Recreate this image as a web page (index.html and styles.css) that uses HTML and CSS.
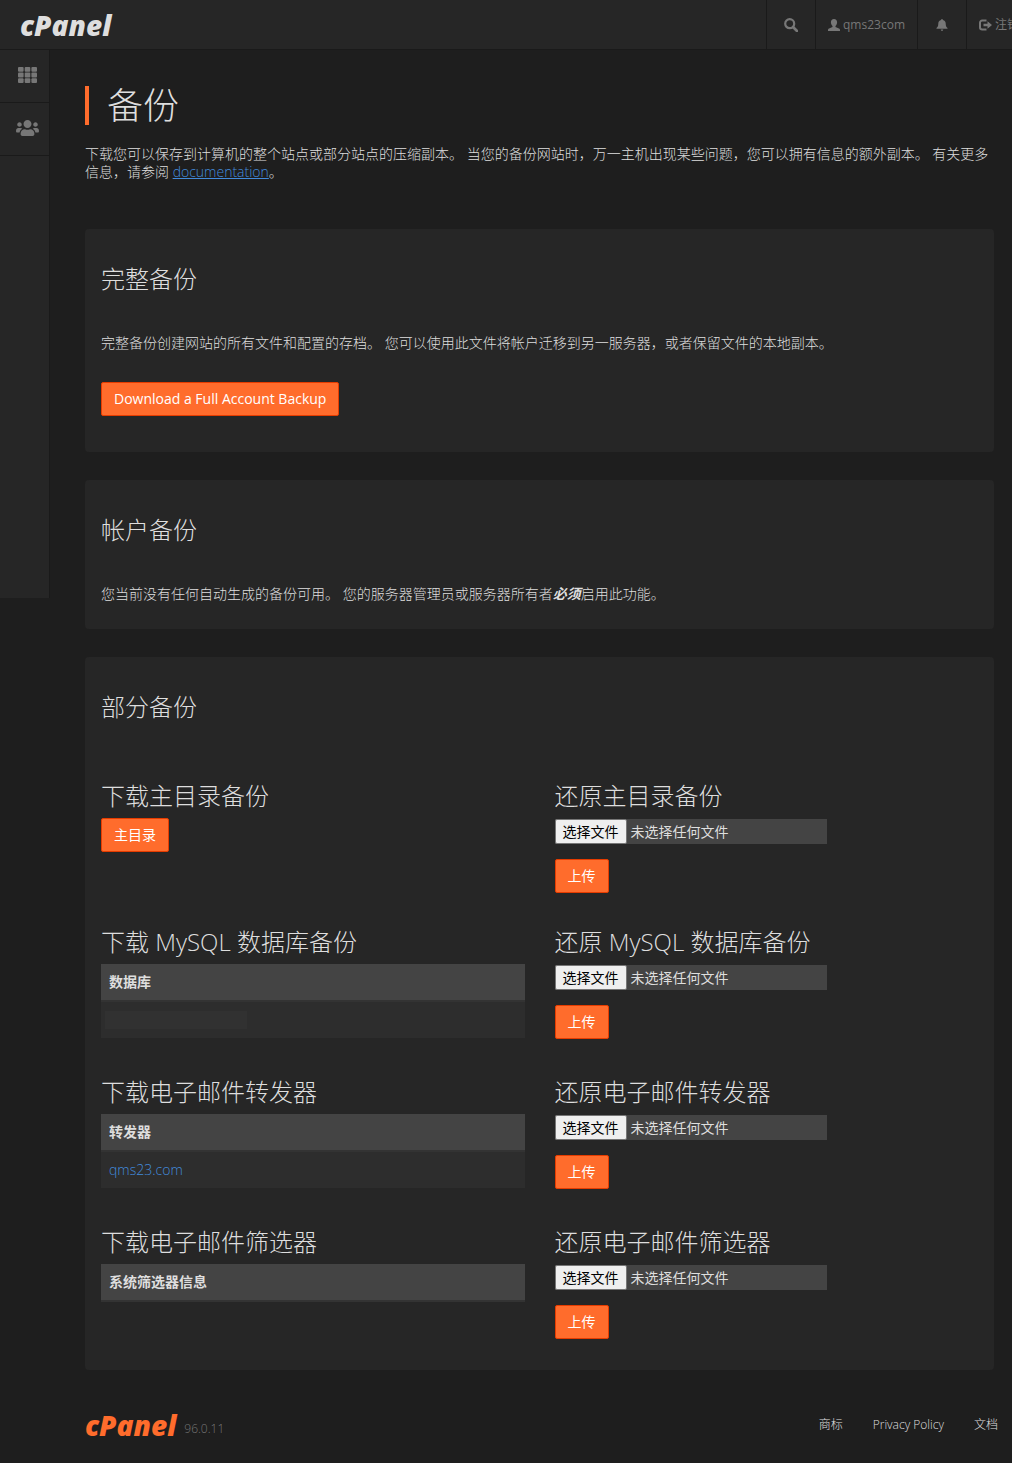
FILE: index.html
```
<!DOCTYPE html>
<html lang="zh-CN">
    <head>
        <meta charset="UTF-8">
        <meta name="viewport" content="width=device-width, initial-scale=1.0">
        <title>cPanel - 备份</title>
        <link rel="stylesheet" href="styles.css">
    </head>

    <body>
        <header class="topbar">
            <a class="logo" href="#">cPanel</a>
            <nav class="topnav">
                <a class="topnav-icon" href="#" aria-label="搜索">
                    <svg width="14" height="14" viewBox="0 0 14 14">
                        <circle cx="5.7" cy="5.7" r="4.5" fill="none" stroke="currentColor" stroke-width="2.2"/>
                        <path d="M9 9l4 4" stroke="currentColor" stroke-width="2.6" stroke-linecap="round"/>
                    </svg>
                </a>
                <a href="#">
                    <svg width="12" height="12" viewBox="0 0 12 12" fill="currentColor">
                        <path d="M6 0C4 0 2.900 1.400 2.900 3.300c0 1.500.6 2.900 1.600 3.700v1L1 9.500C.3 9.800 0 10.300 0 11v1h12v-1c0-.7-.3-1.200-1-1.500L7.500 8V7c1-.8 1.600-2.200 1.600-3.700C9.100 1.400 8 0 6 0z"/>
                    </svg>
                    <span>qms23com</span>
                </a>
                <a class="topnav-icon" href="#" aria-label="通知">
                    <svg width="12" height="12" viewBox="0 0 12 12" fill="currentColor">
                        <path d="M6 0c-.6 0-.9.400-.9.900C3.300 1.300 2.300 2.700 2.300 4.500c0 2.500-.7 3.700-1.800 4.600v.7h11v-.7C10.400 8.200 9.700 7 9.700 4.500c0-1.800-1-3.200-2.800-3.600C6.900.4 6.600 0 6 0zM4.700 10.600c.1.800.6 1.300 1.300 1.300s1.200-.5 1.300-1.300z"/>
                    </svg>
                </a>
                <a href="#">
                    <svg width="13" height="12" viewBox="0 0 13 12">
                        <path d="M7.500 1.500H3.200A2.200 2.200 0 0 0 1 3.700v4.600a2.200 2.200 0 0 0 2.200 2.200h4.300" fill="none" stroke="currentColor" stroke-width="2"/>
                        <path d="M4.500 4.700h4V2.200L13 6 8.500 9.800V7.300h-4z" fill="currentColor"/>
                    </svg>
                    <span>注销</span>
                </a>
            </nav>
        </header>

        <div class="layout">
            <aside class="sidebar">
                <a href="#" aria-label="主页">
                    <svg width="19" height="16" viewBox="0 0 19 16" fill="currentColor">
                        <rect x="0" y="0" width="5.600" height="4.800" rx="1"/>
                        <rect x="6.700" y="0" width="5.600" height="4.800" rx="1"/>
                        <rect x="13.400" y="0" width="5.600" height="4.800" rx="1"/>
                        <rect x="0" y="5.600" width="5.600" height="4.800" rx="1"/>
                        <rect x="6.700" y="5.600" width="5.600" height="4.800" rx="1"/>
                        <rect x="13.400" y="5.600" width="5.600" height="4.800" rx="1"/>
                        <rect x="0" y="11.200" width="5.600" height="4.800" rx="1"/>
                        <rect x="6.700" y="11.200" width="5.600" height="4.800" rx="1"/>
                        <rect x="13.400" y="11.200" width="5.600" height="4.800" rx="1"/>
                    </svg>
                </a>
                <a href="#" aria-label="用户管理器">
                    <svg width="23" height="16" viewBox="0 0 640 448" fill="currentColor">
                        <path d="M96 192c35.300 0 64-28.700 64-64s-28.700-64-64-64-64 28.700-64 64 28.700 64 64 64zm448 0c35.300 0 64-28.700 64-64s-28.700-64-64-64-64 28.700-64 64 28.700 64 64 64zm32 32h-64c-17.600 0-33.500 7.100-45.100 18.600 40.300 22.100 68.900 62 75.100 109.400h66c17.700 0 32-14.300 32-32v-32c0-35.300-28.700-64-64-64zm-256 0c61.900 0 112-50.100 112-112S381.900 0 320 0 208 50.100 208 112s50.100 112 112 112zm76.800 32h-8.300c-20.800 10-43.900 16-68.500 16s-47.600-6-68.500-16h-8.300C179.600 256 128 307.600 128 371.200V400c0 26.500 21.500 48 48 48h288c26.500 0 48-21.500 48-48v-28.800c0-63.600-51.600-115.200-115.200-115.200zm-223.700-13.400C161.500 231.100 145.600 224 128 224H64c-35.300 0-64 28.700-64 64v32c0 17.700 14.300 32 32 32h65.900c6.300-47.400 34.900-87.300 75.200-109.400z"/>
                    </svg>
                </a>
            </aside>

            <div class="content">
                <main>
                    <h1>备份</h1>
                    <p>下载您可以保存到计算机的整个站点或部分站点的压缩副本。 当您的备份网站时，万一主机出现某些问题，您可以拥有信息的额外副本。 有关更多信息，请参阅 <a class="doc-link" href="#">documentation</a>。</p>

                    <section class="panel first">
                        <h2>完整备份</h2>
                        <p>完整备份创建网站的所有文件和配置的存档。 您可以使用此文件将帐户迁移到另一服务器，或者保留文件的本地副本。</p>
                        <div class="actions">
                            <button type="button" class="btn">Download a Full Account Backup</button>
                        </div>
                    </section>

                    <section class="panel">
                        <h2>帐户备份</h2>
                        <p>您当前没有任何自动生成的备份可用。 您的服务器管理员或服务器所有者<strong><em>必须</em></strong>启用此功能。</p>
                    </section>

                    <section class="panel">
                        <h2>部分备份</h2>
                        <div class="partial">
                            <div>
                                <h3>下载主目录备份</h3>
                                <button type="button" class="btn">主目录</button>
                            </div>
                            <form action="#">
                                <h3>还原主目录备份</h3>
                                <label class="file">
                                    <input type="file">
                                    <span class="file-btn">选择文件</span>
                                    <span>未选择任何文件</span>
                                </label>
                                <button type="submit" class="btn">上传</button>
                            </form>

                            <div>
                                <h3>下载 MySQL 数据库备份</h3>
                                <table>
                                    <thead><tr><th>数据库</th></tr></thead>
                                    <tbody><tr><td><div class="masked"></div></td></tr></tbody>
                                </table>
                            </div>
                            <form action="#">
                                <h3>还原 MySQL 数据库备份</h3>
                                <label class="file">
                                    <input type="file">
                                    <span class="file-btn">选择文件</span>
                                    <span>未选择任何文件</span>
                                </label>
                                <button type="submit" class="btn">上传</button>
                            </form>

                            <div>
                                <h3>下载电子邮件转发器</h3>
                                <table>
                                    <thead><tr><th>转发器</th></tr></thead>
                                    <tbody><tr><td><a href="#">qms23.com</a></td></tr></tbody>
                                </table>
                            </div>
                            <form action="#">
                                <h3>还原电子邮件转发器</h3>
                                <label class="file">
                                    <input type="file">
                                    <span class="file-btn">选择文件</span>
                                    <span>未选择任何文件</span>
                                </label>
                                <button type="submit" class="btn">上传</button>
                            </form>

                            <div>
                                <h3>下载电子邮件筛选器</h3>
                                <table>
                                    <thead><tr><th>系统筛选器信息</th></tr></thead>
                                </table>
                            </div>
                            <form action="#">
                                <h3>还原电子邮件筛选器</h3>
                                <label class="file">
                                    <input type="file">
                                    <span class="file-btn">选择文件</span>
                                    <span>未选择任何文件</span>
                                </label>
                                <button type="submit" class="btn">上传</button>
                            </form>
                        </div>
                    </section>
                </main>

                <footer>
                    <div class="brand">
                        <a class="logo" href="#">cPanel</a>
                        <span class="version">96.0.11</span>
                    </div>
                    <nav class="footer-links">
                        <a href="#">商标</a>
                        <a href="#">Privacy Policy</a>
                        <a href="#">文档</a>
                    </nav>
                </footer>
            </div>
        </div>
    </body>

</html>
```
FILE: styles.css
```
* {
    margin: 0;
    padding: 0;
    box-sizing: border-box;
}

body {
    background: #1e1e1e;
    color: #dedede;
    font-family: "Open Sans", "Noto Sans CJK SC", sans-serif;
    font-size: 14px;
    font-weight: 300;
    line-height: 18px;
}

a {
    color: #428bdc;
    text-decoration: none;
}

svg {
    display: block;
    flex: none;
}

strong {
    font-weight: 700;
}

.logo {
    font-family: "Open Sans", sans-serif;
    font-size: 28px;
    font-weight: 800;
    font-style: italic;
    line-height: 32px;
    color: #dedede;
}

.topbar {
    display: flex;
    justify-content: space-between;
    align-items: stretch;
    height: 50px;
    padding-left: 20px;
    background: #262626;
    border-bottom: 1px solid #1a1a1a;
    overflow: hidden;

    & .logo {
        align-self: center;
    }
}

.topnav {
    display: flex;
    margin-right: -19px;
    font-size: 12px;
    font-weight: 400;
    white-space: nowrap;

    & a {
        display: flex;
        align-items: center;
        gap: 3px;
        padding: 0 12px;
        border-left: 1px solid #1a1a1a;
        color: #777;
    }

    & .topnav-icon {
        width: 49px;
        justify-content: center;
    }
}

.layout {
    display: flex;
    align-items: flex-start;
}

.sidebar {
    flex: none;
    width: 50px;
    min-height: 548px;
    background: #262626;
    border-right: 1px solid #1a1a1a;

    & a {
        display: flex;
        justify-content: center;
        align-items: center;
        height: 53px;
        padding: 0 0 2px 5px;
        border-bottom: 1px solid #1a1a1a;
        color: #777;
    }
}

.content {
    flex: 1;
    min-width: 0;
    padding: 36px 18px 18px 35px;
}

h1 {
    margin-bottom: 20px;
    padding-left: 18px;
    border-left: 4px solid #ff6c2c;
    font-size: 36px;
    font-weight: 300;
    line-height: 39px;
}

h2,
h3 {
    font-size: 24px;
    font-weight: 300;
    line-height: 32px;
}

.doc-link {
    text-decoration: underline;
}

.panel {
    margin-top: 28px;
    padding: 34px 16px 26px;
    background: #262626;
    border-radius: 4px;

    &.first {
        margin-top: 48px;
    }

    & > p {
        margin-top: 39px;
    }
}

.actions {
    margin: 30px 0 10px;
}

.btn {
    display: block;
    height: 34px;
    padding: 0 12px;
    border: 1px solid #e63c00;
    border-radius: 2px;
    background: #ff6c2c;
    color: #fff;
    font: inherit;
    font-weight: 400;
    cursor: pointer;
}

.partial {
    display: grid;
    grid-template-columns: 1fr 1fr;
    gap: 28px 30px;
    margin-top: 57px;

    & h3 {
        margin-bottom: 6px;
    }

    & form {
        padding-bottom: 5px;
    }
}

/* the native input covers the whole field, its text is drawn by the spans */
.file {
    position: relative;
    display: flex;
    align-items: center;
    gap: 4px;
    width: 272px;
    max-width: 100%;
    height: 25px;
    margin: 7px 0 15px;
    background: #444;
    font-weight: 400;

    & input {
        position: absolute;
        inset: 0;
        width: 100%;
        opacity: 0;
        cursor: pointer;
    }
}

.file-btn {
    height: 25px;
    padding: 3px 7px;
    border: 1px solid #767676;
    border-radius: 2px;
    background: #efefef;
    color: #000;
}

table {
    width: 100%;
    margin-bottom: 10px;
    border-collapse: separate;
    border-spacing: 0;
}

th,
td {
    height: 36px;
    padding: 0 8px;
    text-align: left;
}

th {
    height: 38px;
    background: #444;
    border-bottom: 2px solid #333;
    font-weight: 700;
}

td {
    background: #2d2d2d;
}

.masked {
    width: 142px;
    height: 18px;
    margin-left: -4px;
    background: #313131;
}

footer {
    display: flex;
    justify-content: space-between;
    align-items: center;
    margin-top: 39px;
    font-size: 12px;

    & .logo {
        color: #ff6c2c;
    }
}

.brand {
    display: flex;
    align-items: center;
    gap: 8px;
}

.version {
    padding-top: 8px;
    color: #777;
}

.footer-links {
    display: flex;
    gap: 30px;
    margin-right: -4px;

    & a {
        color: #dedede;
    }
}
```
